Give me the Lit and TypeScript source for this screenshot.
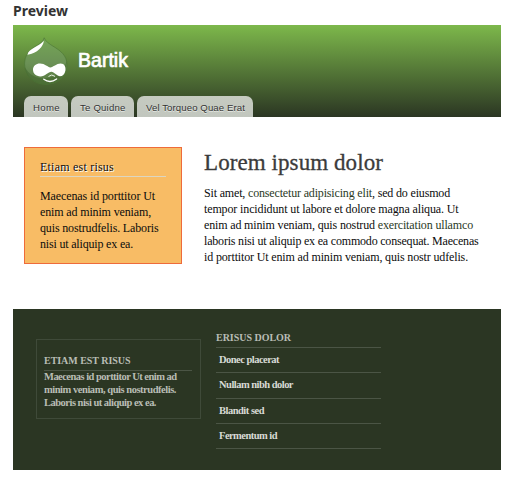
import { LitElement, html, css } from "lit";
import { customElement, property } from "lit/decorators.js";

/* One line of text whose tracking is set so that it fills a given measure. */
@customElement("fit-line")
class FitLine extends LitElement {
  @property({ type: Number }) measure = 0;

  static styles = css`
    :host { display: block; white-space: nowrap; }
  `;

  firstUpdated() {
    const run = this.renderRoot.querySelector("span")!;
    const count = (this.textContent ?? "").trim().length;
    const natural = run.getBoundingClientRect().width;
    run.style.letterSpacing = `${(this.measure - natural) / count}px`;
  }

  render() {
    return html`<span><slot></slot></span>`;
  }
}

@customElement("drop-logo")
class DropLogo extends LitElement {
  static styles = css`
    :host { display: block; width: 44px; height: 48px; }
    svg { display: block; }
  `;

  render() {
    return html`<svg width="44" height="48" viewBox="24 37 44 48">
      <defs>
        <linearGradient id="body" x1="0" y1="0" x2="0" y2="1">
          <stop offset="0" stop-color="#75a656" />
          <stop offset="0.55" stop-color="#6b9156" />
          <stop offset="1" stop-color="#56793f" />
        </linearGradient>
      </defs>
      <path fill="url(#body)" stroke="#4c7535" stroke-width="0.6" d="M44.2 37.8C45.6 41.6 49 43.6 53 46.2C60.5 50.6 67 55.6 67 64.8C67 76.4 57.4 84.4 46 84.4C34 84.4 24.6 75.6 24.6 64C24.6 55.6 29 50.2 35 46.6C40 43.6 43 42 44.2 37.8Z" />
      <path fill="#44682f" opacity="0.6" d="M66.6 60C67.6 76 57.4 84.4 46 84.4C34.6 84.4 26 77 24.8 67C30 77 40 79.6 48 78C58 76 65.4 70 66.6 60Z" />
      <path fill="#fff" d="M43.8 40.8C43.6 46.4 37.4 53.4 27.4 54.8C28.6 48.6 38.4 47 43.8 40.8Z" />
      <path fill="#fff" d="M40 63.6C45 63.6 47.8 67.4 50.4 67.4C53 67.4 56.6 63.6 60.6 63.6C64.4 63.6 66 67 65.4 70.4C64.8 74.2 62.6 76.2 60 76.2C57 76.2 54.2 71.8 51.4 71.8C48.2 71.8 45.2 76.4 40.4 76.4C36 76.4 33 73.6 33 69.8C33 66 36 63.6 40 63.6Z" />
      <path fill="none" stroke="#e9f0e4" stroke-width="1" stroke-linecap="round" d="M48.8 76.2Q51.6 73.6 54.8 76.2" />
      <path fill="none" stroke="#fff" stroke-width="1.4" stroke-linecap="round" d="M43.8 79.2Q50 83.8 56.6 79" />
    </svg>`;
  }
}

@customElement("app-root")
class AppRoot extends LitElement {
  static styles = css`
    :host { display: block; width: 512px; height: 483px; background: #fff; overflow: hidden; font-family: "Liberation Serif", serif; font-size: 12px; line-height: 16px; color: #0c0c0c; }
    .page { width: 488px; margin-left: 13px; }
    .label { height: 25px; font: bold 14px/22px "Noto Sans", sans-serif; color: #333; }
    .header { height: 92px; box-sizing: border-box; padding: 12px 11px 0; background: linear-gradient(#7db84b, #2b3623); display: flex; flex-direction: column; justify-content: space-between; font-family: "Liberation Sans", sans-serif; }
    .brand { display: flex; gap: 11px; }
    .name { margin-top: 11px; margin-left: -1px; font-size: 19.5px; line-height: 24px; color: #fff; -webkit-text-stroke: 0.7px #fff; }
    .tabs { display: flex; gap: 3px; }
    .tab { height: 21px; box-sizing: border-box; padding-left: 9px; border-radius: 7px 7px 0 0; background: linear-gradient(#c6cbc1, #c1c6be); font-size: 9.6px; line-height: 23px; color: #333; text-shadow: 0 1px #e6e9e4; }
    .home { width: 44px; }
    .mid { width: 63px; }
    .wide { width: 116px; }
    .main { display: flex; gap: 22px; padding: 30px 11px 0; height: 192px; box-sizing: border-box; }
    .aside { width: 158px; height: 117px; box-sizing: border-box; border: 1px solid #ee6b3b; background: #f8bc65; padding: 11px 15px 0; }
    .aside-title { padding-bottom: 1px; border-bottom: 1px solid #dcd6c2; margin-bottom: 11px; text-shadow: 1px 1px #fff; }
    .title { margin-top: 3px; font-size: 23px; line-height: 26px; color: #3b3b3b; margin-bottom: 9px; -webkit-text-stroke: 0.3px #3b3b3b; }
    .link { color: #2a3a1e; }
    .footer { height: 161px; box-sizing: border-box; background: #2b3623; padding: 22px 23px 0; display: flex; gap: 15px; font-size: 10.5px; line-height: 13px; color: #b9bdb5; font-weight: bold; }
    .card { margin-top: 8px; width: 165px; height: 80px; box-sizing: border-box; border: 1px solid #3f4a39; padding: 14px 8px 0 7px; }
    .caps { font-size: 10px; border-bottom: 1px solid #4b5545; }
    .card .caps { height: 16px; line-height: 14px; margin-bottom: -1px; }
    .list { width: 165px; }
    .list .caps { height: 16px; line-height: 14px; }
    .item { box-sizing: border-box; height: 25px; padding-left: 3px; line-height: 24px; border-bottom: 1px solid #4b5545; color: #d8dad5; }
    .tall { height: 26px; }
  `;

  render() {
    return html`
      <div class="page">
        <div class="label"><fit-line measure="55">Preview</fit-line></div>
        <div class="header">
          <div class="brand">
            <drop-logo></drop-logo>
            <div class="name"><fit-line measure="50">Bartik</fit-line></div>
          </div>
          <div class="tabs">
            <div class="tab home"><fit-line measure="27">Home</fit-line></div>
            <div class="tab mid"><fit-line measure="45.5">Te Quidne</fit-line></div>
            <div class="tab wide"><fit-line measure="99">Vel Torqueo Quae Erat</fit-line></div>
          </div>
        </div>
        <div class="main">
          <div class="aside">
            <div class="aside-title"><fit-line measure="74">Etiam est risus</fit-line></div>
            <fit-line measure="115">Maecenas id porttitor Ut</fit-line>
            <fit-line measure="111">enim ad minim veniam,</fit-line>
            <fit-line measure="118.5">quis nostrudfelis. Laboris</fit-line>
            <fit-line measure="93">nisi ut aliquip ex ea.</fit-line>
          </div>
          <div>
            <div class="title"><fit-line measure="179">Lorem ipsum dolor</fit-line></div>
            <fit-line measure="246">Sit amet, <span class="link">consectetur adipisicing elit</span>, sed do eiusmod</fit-line>
            <fit-line measure="254.5">tempor incididunt ut labore et dolore magna aliqua. Ut</fit-line>
            <fit-line measure="269">enim ad minim veniam, quis nostrud <span class="link">exercitation ullamco</span></fit-line>
            <fit-line measure="274.5">laboris nisi ut aliquip ex ea commodo consequat. Maecenas</fit-line>
            <fit-line measure="264">id porttitor Ut enim ad minim veniam, quis nostr udfelis.</fit-line>
          </div>
        </div>
        <div class="footer">
          <div class="card">
            <div class="caps"><fit-line measure="86.5">ETIAM EST RISUS</fit-line></div>
            <fit-line measure="132.5">Maecenas id porttitor Ut enim ad</fit-line>
            <fit-line measure="132">minim veniam, quis nostrudfelis.</fit-line>
            <fit-line measure="112">Laboris nisi ut aliquip ex ea.</fit-line>
          </div>
          <div class="list">
            <div class="caps"><fit-line measure="75">ERISUS DOLOR</fit-line></div>
            <div class="item"><fit-line measure="60">Donec placerat</fit-line></div>
            <div class="item tall"><fit-line measure="74">Nullam nibh dolor</fit-line></div>
            <div class="item"><fit-line measure="45">Blandit sed</fit-line></div>
            <div class="item"><fit-line measure="58">Fermentum id</fit-line></div>
          </div>
        </div>
      </div>
    `;
  }
}
